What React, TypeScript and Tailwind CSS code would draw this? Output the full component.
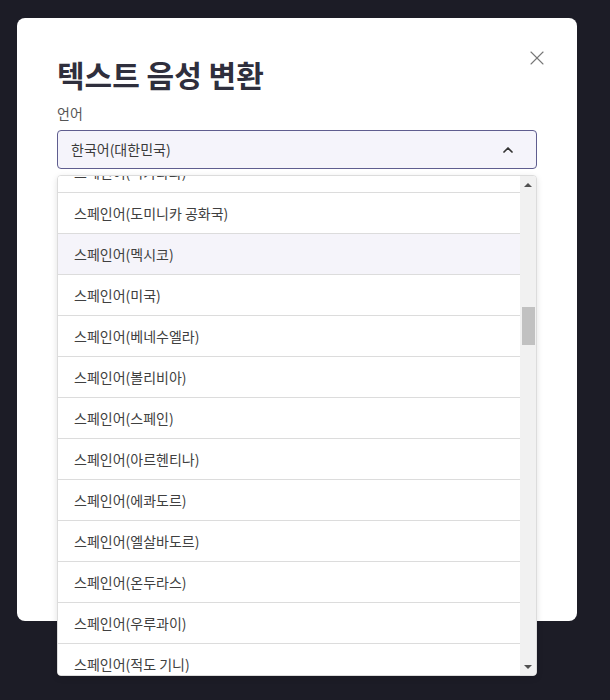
import { X, ChevronUp } from 'lucide-react'

const languages = [
  '스페인어(니카라과)',
  '스페인어(도미니카 공화국)',
  '스페인어(멕시코)',
  '스페인어(미국)',
  '스페인어(베네수엘라)',
  '스페인어(볼리비아)',
  '스페인어(스페인)',
  '스페인어(아르헨티나)',
  '스페인어(에콰도르)',
  '스페인어(엘살바도르)',
  '스페인어(온두라스)',
  '스페인어(우루과이)',
  '스페인어(적도 기니)',
]

const font = { fontFamily: '"Noto Sans CJK KR", "Noto Sans", sans-serif' }

function LanguageList() {
  return (
    <div className="absolute left-0 right-0 top-full mt-[6px] z-10 h-[501px] flex overflow-hidden rounded-[4px] border border-[#dcdcdc] bg-white shadow-[0_2px_6px_rgba(0,0,0,0.12)]">
      <ul className="flex-1 -mt-[24px]">
        {languages.map((lang) => (
          <li
            key={lang}
            className={
              'h-[41px] flex items-center pl-[16px] border-b border-[#dcdcdc] text-[14px] text-[#404040] ' +
              (lang === '스페인어(멕시코)' ? 'bg-[#f5f4fa]' : 'bg-white')
            }
          >
            {lang}
          </li>
        ))}
      </ul>
      <div className="w-[16px] bg-[#f1f1f1] flex flex-col items-center">
        <div className="h-[17px] flex items-center justify-center">
          <div className="w-0 h-0 border-l-[4px] border-r-[4px] border-b-[4px] border-l-transparent border-r-transparent border-b-[#505050]" />
        </div>
        <div className="mt-[114px] w-[13px] h-[38px] bg-[#c1c1c1]" />
        <div className="flex-1" />
        <div className="h-[17px] flex items-center justify-center">
          <div className="w-0 h-0 border-l-[4px] border-r-[4px] border-t-[4px] border-l-transparent border-r-transparent border-t-[#505050]" />
        </div>
      </div>
    </div>
  )
}

export default function App() {
  return (
    <div className="w-full h-[700px] bg-[#1c1c26] pl-[17px] pt-[18px] overflow-hidden" style={font}>
      <div className="relative w-[560px] h-[603px] bg-white rounded-[8px] px-[40px] pt-[38px]">
        <button className="absolute right-[28px] top-[28px] text-[#777]">
          <X className="h-[24px] w-[24px]" strokeWidth={1.1} />
        </button>
        <h1 className="text-[30px] leading-[36px] font-bold text-[#2f2f3d]">텍스트 음성 변환</h1>
        <label className="block mt-[11px] text-[14px] leading-[20px] text-[#555]">언어</label>
        <div className="relative mt-[7px]">
          <div className="h-[39px] flex items-center justify-between pl-[13px] pr-[20px] rounded-[4px] border border-[#5f5d8f] bg-[#f5f4fb] text-[14px] text-[#3a3a3a]">
            <span>한국어(대한민국)</span>
            <ChevronUp className="h-[16px] w-[16px] text-[#333]" strokeWidth={2.6} />
          </div>
          <LanguageList />
        </div>
      </div>
    </div>
  )
}
